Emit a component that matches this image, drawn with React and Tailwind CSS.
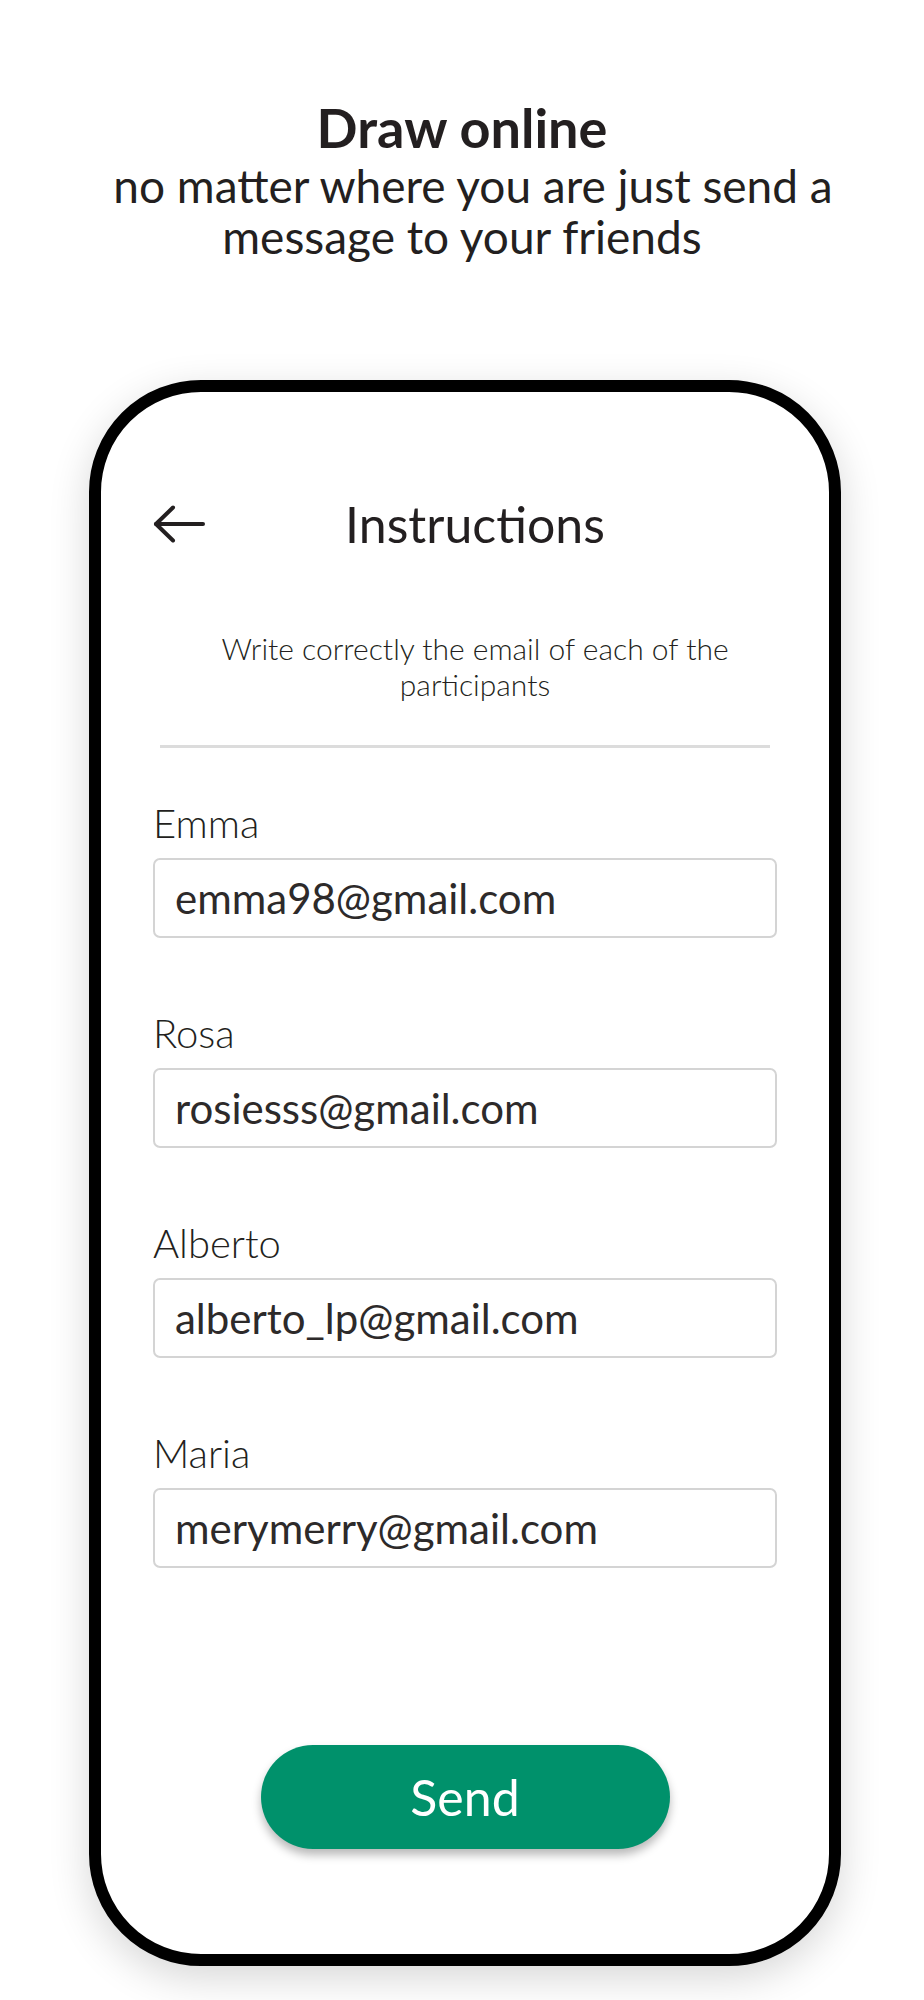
import React from 'react';

const participants = [
  { name: 'Emma', email: 'emma98@gmail.com' },
  { name: 'Rosa', email: 'rosiesss@gmail.com' },
  { name: 'Alberto', email: 'alberto_lp@gmail.com' },
  { name: 'Maria', email: 'merymerry@gmail.com' },
];

const BackArrow = () => (
  <svg width="53" height="38" viewBox="0 0 53 38" fill="none">
    <path d="M3 19 H50" stroke="#231f20" strokeWidth="4" strokeLinecap="round" />
    <path d="M20 2.5 L3 19 L20 35.5" stroke="#231f20" strokeWidth="4" strokeLinecap="round" strokeLinejoin="round" />
  </svg>
);

export default function App() {
  return (
    <div
      className="w-[924px] min-h-[2000px] bg-white text-[#231f20] flex flex-col items-center"
      style={{ fontFamily: 'Lato, "Noto Sans", sans-serif' }}
    >
      {/* Encabezado */}
      <div className="pt-[100px] text-center">
        <h1 className="text-[54px] leading-[56px] font-bold">Draw online</h1>
        <p className="mt-[4px] text-[46px] leading-[51px]">
          <span className="block pl-[22px]">no matter where you are just send a</span>
          <span className="block">message to your friends</span>
        </p>
      </div>

      {/* Teléfono */}
      <div className="mt-[118px] ml-[6px] w-[752px] h-[1586px] border-[12px] border-black rounded-[112px] bg-white shadow-[0_12px_40px_rgba(0,0,0,0.16)] px-[52px] pt-[102px] flex flex-col">
        <div className="grid grid-cols-[53px_1fr_53px] items-center h-[60px]">
          <BackArrow />
          <h2 className="text-center pl-[20px] text-[50px] leading-[60px]">Instructions</h2>
          <div />
        </div>

        <p className="mt-[76px] text-center pl-[20px] text-[30px] leading-[36px] font-light">
          Write correctly the email of each of the
          <br />
          participants
        </p>

        <div className="mt-[43px] mx-[7px] h-[3px] bg-[#dcdcdc]" />

        <div className="mt-[55px] flex flex-col gap-[75px]">
          {participants.map((p) => (
            <div key={p.name} className="flex flex-col gap-[15px]">
              <label className="text-[40px] leading-[40px] font-light">{p.name}</label>
              <div className="h-[80px] border-2 border-[#d4d4d4] rounded-[7px] flex items-center px-[20px]">
                <span className="text-[42px] leading-[50px] text-[#2d2a2a]">{p.email}</span>
              </div>
            </div>
          ))}
        </div>

        <button className="mt-[177px] self-center w-[409px] h-[104px] rounded-full bg-[#00916b] text-white text-[50px] shadow-[0_6px_10px_rgba(0,0,0,0.28)]">
          Send
        </button>
      </div>
    </div>
  );
}
